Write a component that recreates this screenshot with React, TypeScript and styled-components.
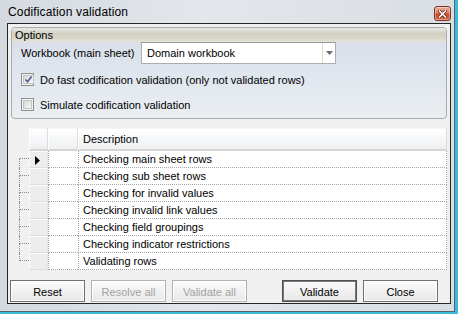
import React from "react";
import styled, { createGlobalStyle } from "styled-components";

const Global = createGlobalStyle`
  html, body { margin: 0; padding: 0; }
  body {
    width: 458px;
    height: 314px;
    overflow: hidden;
    font-family: "Liberation Sans", Arial, sans-serif;
    font-size: 11px;
    color: #000;
  }
  * { box-sizing: border-box; }
`;

const Screen = styled.div`
  width: 458px;
  height: 314px;
  background: #3cbcdc;
  overflow: hidden;
`;

const Window = styled.div`
  width: 455px;
  height: 312px;
  border-right: 1px solid #56616b;
  border-bottom: 1px solid #56616b;
  background: linear-gradient(to right, #d4dae0 0%, #e3e7eb 45%, #d9dee3 100%);
  display: flex;
  flex-direction: column;
  padding: 0 2px 7px 7px;
`;

const TitleBar = styled.div`
  height: 23px;
  display: flex;
  align-items: flex-start;
  justify-content: space-between;
`;

const Title = styled.div`
  font-size: 12px;
  letter-spacing: 0.15px;
  line-height: 14px;
  padding: 5px 0 0 1px;
`;

const CloseBtn = styled.div`
  width: 17px;
  height: 15px;
  margin: 6px 1px 0 0;
  border: 1px solid #7e3324;
  border-radius: 3px;
  background: linear-gradient(#eab4a2 0%, #dc7d62 45%, #c8482c 55%, #d8674a 100%);
  box-shadow: inset 0 0 0 1px rgba(255, 255, 255, 0.35);
  display: flex;
  align-items: center;
  justify-content: center;
`;

const Client = styled.div`
  flex: 1;
  margin-right: 1px;
  border: 1px solid #262626;
  background: #f0f0f0;
  display: flex;
  flex-direction: column;
  padding: 3px 3px 1px 2px;
`;

const Group = styled.div`
  height: 92px;
  margin-left: 1px;
  border: 1px solid #a9abad;
  border-radius: 4px;
  background: linear-gradient(#d6dde8 0%, #e0e6ee 50%, #eaeef2 100%);
  display: flex;
  flex-direction: column;
  overflow: hidden;
`;

const GroupHeader = styled.div`
  height: 14px;
  line-height: 14px;
  padding-left: 3px;
  background: linear-gradient(#e9e9e1 0%, #d1d0c0 40%, #d8d8ca 75%, #e3e3da 100%);
`;

const FieldRow = styled.div`
  height: 22px;
  display: flex;
  align-items: center;
  padding-left: 9px;
`;

const Label = styled.div`
  width: 120px;
`;

const Combo = styled.div`
  width: 195px;
  height: 22px;
  border: 1px solid #abadb3;
  border-top-color: #9a9ca2;
  background: #fff;
  display: flex;
`;

const ComboText = styled.div`
  flex: 1;
  padding-left: 5px;
  line-height: 20px;
`;

const ComboButton = styled.div`
  width: 13px;
  border-left: 1px solid #e2dcc2;
  display: flex;
  align-items: center;
  justify-content: center;
  padding-left: 1px;
`;

const CheckRow = styled.div<{ $first?: boolean }>`
  height: 25px;
  margin-top: ${(p) => (p.$first ? "3px" : "0")};
  display: flex;
  align-items: center;
  padding-left: 9px;
  gap: 6px;
`;

const CheckBox = styled.div`
  width: 13px;
  height: 13px;
  border: 1px solid #8e8f8f;
  background: #f4f4f4;
  padding: 1px;
  display: flex;
`;

const CheckInner = styled.div`
  flex: 1;
  background: linear-gradient(135deg, #d6d6d6 0%, #e8e8e8 50%, #f8f8f8 100%);
  border: 1px solid #c4c4c4;
  display: flex;
  align-items: center;
  justify-content: center;
`;

const Grid = styled.div`
  margin: 9px 0 0 1px;
  display: flex;
  flex-direction: column;
`;

const HeaderRow = styled.div`
  height: 23px;
  display: flex;
  padding-left: 18px;
`;

const HeaderCell = styled.div<{ $w?: number }>`
  ${(p) => (p.$w ? `width: ${p.$w}px;` : "flex: 1;")}
  border-top: 1px solid #f4f4f4;
  border-left: 1px solid #ffffff;
  border-right: 1px solid #dcdcdc;
  border-bottom: 2px solid #d5d5d5;
  background: linear-gradient(#ffffff 0%, #f7f8f9 45%, #eeeff0 100%);
  padding-left: 4px;
  line-height: 20px;
`;

const DataRow = styled.div`
  height: 17px;
  display: flex;
`;

const TreeCell = styled.div`
  width: 18px;
  display: flex;
  flex-direction: column;
`;

const TreeTop = styled.div<{ $line: boolean }>`
  height: 8px;
  width: 10px;
  margin-left: 8px;
  border-bottom: 1px dotted #8a8a8a;
  border-left: 1px ${(p) => (p.$line ? "dotted #8a8a8a" : "solid transparent")};
`;

const TreeBottom = styled.div<{ $line: boolean }>`
  flex: 1;
  margin-left: 8px;
  border-left: 1px ${(p) => (p.$line ? "dotted #8a8a8a" : "solid transparent")};
`;

const Indicator = styled.div`
  width: 19px;
  border-top: 1px solid #fbfbfb;
  border-left: 1px solid #fbfbfb;
  border-bottom: 1px solid #dedede;
  border-right: 1px solid #e4e4e4;
  background: #ededed;
  padding: 3px 0 0 5px;
`;

const DotCell = styled.div<{ $w?: number; $last?: boolean }>`
  ${(p) => (p.$w ? `width: ${p.$w}px;` : "flex: 1;")}
  background: #fff;
  border-left: 1px dotted #a6a6a6;
  border-bottom: 1px dotted #a6a6a6;
  ${(p) => (p.$last ? "border-right: 1px dotted #a6a6a6;" : "")}
  padding-left: 4px;
  line-height: 16px;
  white-space: nowrap;
  overflow: hidden;
`;

const Spacer = styled.div`
  flex: 1;
`;

const ButtonBar = styled.div`
  height: 22px;
  display: flex;
  gap: 6px;
`;

const Button = styled.div<{ $disabled?: boolean; $default?: boolean; $push?: boolean }>`
  width: 75px;
  height: 22px;
  margin-left: ${(p) => (p.$push ? "29px" : "0")};
  border: 1px solid ${(p) => (p.$disabled ? "#adb2b5" : p.$default ? "#505050" : "#707070")};
  background: linear-gradient(#fbfbfb 0%, #f1f1f1 50%, #e9e9e9 100%);
  box-shadow: inset 0 0 0 1px ${(p) => (p.$default ? "#7a7a7a" : "#fdfdfd")};
  color: ${(p) => (p.$disabled ? "#a3a3a3" : "#000")};
  display: flex;
  align-items: center;
  justify-content: center;
  padding-top: 1px;
`;

const rows = [
  "Checking main sheet rows",
  "Checking sub sheet rows",
  "Checking for invalid values",
  "Checking invalid link values",
  "Checking field groupings",
  "Checking indicator restrictions",
  "Validating rows",
];

export default function App() {
  return (
    <>
      <Global />
      <Screen>
        <Window>
          <TitleBar>
            <Title>Codification validation</Title>
            <CloseBtn>
              <svg width="9" height="8" viewBox="0 0 9 8">
                <path d="M1.5 1 L7.5 7 M7.5 1 L1.5 7" stroke="#5a1e12" strokeWidth="3" strokeLinecap="square" />
                <path d="M1.5 1 L7.5 7 M7.5 1 L1.5 7" stroke="#ffffff" strokeWidth="1.6" strokeLinecap="square" />
              </svg>
            </CloseBtn>
          </TitleBar>
          <Client>
            <Group>
              <GroupHeader>Options</GroupHeader>
              <FieldRow>
                <Label>Workbook (main sheet)</Label>
                <Combo>
                  <ComboText>Domain workbook</ComboText>
                  <ComboButton>
                    <svg width="7" height="4" viewBox="0 0 7 4">
                      <polygon points="0,0 7,0 3.5,4" fill="#6a6a6a" />
                    </svg>
                  </ComboButton>
                </Combo>
              </FieldRow>
              <CheckRow $first>
                <CheckBox>
                  <CheckInner>
                    <svg width="9" height="9" viewBox="0 0 9 9">
                      <path d="M1.5 4.5 L3.6 6.8 L7.6 1.6" stroke="#4d5f93" strokeWidth="1.7" fill="none" />
                    </svg>
                  </CheckInner>
                </CheckBox>
                <span>Do fast codification validation (only not validated rows)</span>
              </CheckRow>
              <CheckRow>
                <CheckBox>
                  <CheckInner />
                </CheckBox>
                <span>Simulate codification validation</span>
              </CheckRow>
            </Group>
            <Grid>
              <HeaderRow>
                <HeaderCell $w={19} />
                <HeaderCell $w={30} />
                <HeaderCell>Description</HeaderCell>
              </HeaderRow>
              {rows.map((r, i) => (
                <DataRow key={r}>
                  <TreeCell>
                    <TreeTop $line={i !== 0} />
                    <TreeBottom $line={i !== rows.length - 1} />
                  </TreeCell>
                  <Indicator>
                    {i === 0 && (
                      <svg width="5" height="9" viewBox="0 0 5 9">
                        <polygon points="0,0 5,4.5 0,9" fill="#000" />
                      </svg>
                    )}
                  </Indicator>
                  <DotCell $w={30} />
                  <DotCell $last>{r}</DotCell>
                </DataRow>
              ))}
            </Grid>
            <Spacer />
            <ButtonBar>
              <Button>Reset</Button>
              <Button $disabled>Resolve all</Button>
              <Button $disabled>Validate all</Button>
              <Button $default $push>Validate</Button>
              <Button>Close</Button>
            </ButtonBar>
          </Client>
        </Window>
      </Screen>
    </>
  );
}
